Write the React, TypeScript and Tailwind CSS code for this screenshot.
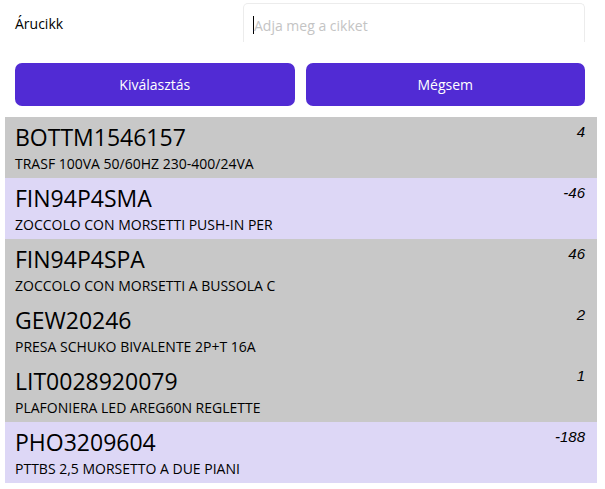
import React from 'react';

type Item = { code: string; name: string; qty: number };

const items: Item[] = [
  { code: 'BOTTM1546157', name: 'TRASF 100VA 50/60HZ 230-400/24VA', qty: 4 },
  { code: 'FIN94P4SMA', name: 'ZOCCOLO CON MORSETTI PUSH-IN PER', qty: -46 },
  { code: 'FIN94P4SPA', name: 'ZOCCOLO CON MORSETTI A BUSSOLA C', qty: 46 },
  { code: 'GEW20246', name: 'PRESA SCHUKO BIVALENTE 2P+T 16A', qty: 2 },
  { code: 'LIT0028920079', name: 'PLAFONIERA LED AREG60N REGLETTE', qty: 1 },
  { code: 'PHO3209604', name: 'PTTBS 2,5 MORSETTO A DUE PIANI', qty: -188 },
];

export default function App() {
  return (
    <div className="w-[605px] h-[489px] bg-white overflow-hidden font-['Open_Sans',sans-serif] text-black">
      <div className="flex items-start h-[42px]">
        <div className="w-[243px] pl-[15px] pt-[14px] text-[14px] leading-[20px]">Árucikk</div>
        <div className="mt-[3px] w-[342px] h-[39px] border-t border-x border-[#ececec] rounded-t-[5px] flex items-center pl-[9px] pt-[4px]">
          <span className="w-px h-[18px] bg-black" />
          <span className="text-[14px] text-[#c4c4c4]">Adja meg a cikket</span>
        </div>
      </div>

      <div className="flex gap-[11px] ml-[15px] w-[570px] mt-[21px]">
        <button className="flex-1 h-[43px] rounded-[7px] bg-[#512bd4] text-white text-[14px]">Kiválasztás</button>
        <button className="flex-1 h-[43px] rounded-[7px] bg-[#512bd4] text-white text-[14px]">Mégsem</button>
      </div>

      <div className="mt-[11px] ml-[5px] w-[592px]">
        {items.map((it) => (
          <div
            key={it.code}
            className={`h-[61px] flex justify-between pl-[10px] pr-[12px] ${it.qty < 0 ? 'bg-[#ddd7f6]' : 'bg-[#c8c8c8]'}`}
          >
            <div className="flex flex-col">
              <div className="text-[23px] leading-[30px] mt-[5px]">{it.code}</div>
              <div className="text-[14px] leading-[20px] mt-[2px]">{it.name}</div>
            </div>
            <div className="font-['Liberation_Sans',sans-serif] italic text-[15px] leading-[18px] mt-[6px]">{it.qty}</div>
          </div>
        ))}
      </div>
    </div>
  );
}
